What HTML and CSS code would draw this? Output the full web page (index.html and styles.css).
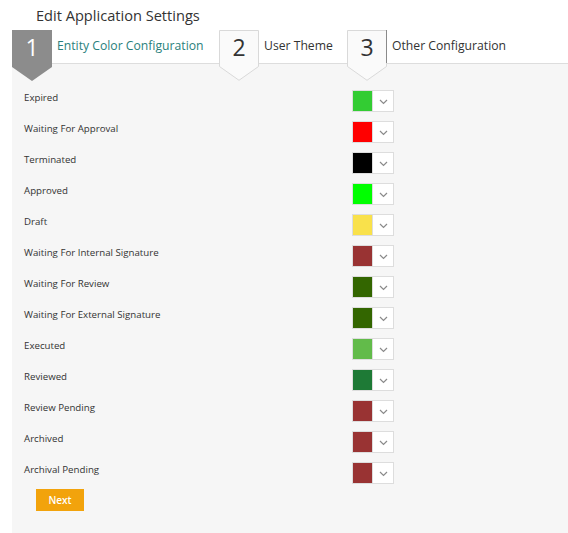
FILE: index.html
```html
<!DOCTYPE html>
<html>
<head>
<meta charset="utf-8">
<link rel="stylesheet" href="styles.css">
</head>
<body>
<div class="title">Edit Application Settings</div>
<div class="tabs">
  <div class="tab tab-1">
    <div class="badge badge-active">
      <svg class="badge-shape" width="40" height="51" viewBox="0 0 40 51"><polygon points="0,0 40,0 40,37 20,51 0,37" fill="#8c8c8c"/></svg>
      <span class="num">1</span>
    </div>
    <span class="tab-label active">Entity Color Configuration</span>
  </div>
  <div class="tab tab-2">
    <div class="badge">
      <svg class="badge-shape" width="40" height="51" viewBox="0 0 40 51"><polygon points="0.5,0.5 39.5,0.5 39.5,36.5 20,50.3 0.5,36.5" fill="#fafafa" stroke="#d9d9d9"/></svg>
      <span class="num">2</span>
    </div>
    <span class="tab-label">User Theme</span>
  </div>
  <div class="tab tab-3">
    <div class="badge">
      <svg class="badge-shape" width="40" height="51" viewBox="0 0 40 51"><polygon points="0.5,0.5 39.5,0.5 39.5,36.5 20,50.3 0.5,36.5" fill="#fafafa" stroke="#d9d9d9"/><line x1="39.5" y1="0" x2="39.5" y2="33" stroke="#8a8a8a"/></svg>
      <span class="num">3</span>
    </div>
    <span class="tab-label">Other Configuration</span>
  </div>
</div>
<div class="panel">
  <div class="rows">
    <div class="label">Expired</div><div class="picker"><span class="swatch" style="background:#33cc33"></span><span class="arrow"><svg width="9" height="6" viewBox="0 0 9 6"><polyline points="1,1 4.5,4.5 8,1" fill="none" stroke="#8a8a8a" stroke-width="1.2"/></svg></span></div>
    <div class="label">Waiting For Approval</div><div class="picker"><span class="swatch" style="background:#ff0000"></span><span class="arrow"><svg width="9" height="6" viewBox="0 0 9 6"><polyline points="1,1 4.5,4.5 8,1" fill="none" stroke="#8a8a8a" stroke-width="1.2"/></svg></span></div>
    <div class="label">Terminated</div><div class="picker"><span class="swatch" style="background:#000000"></span><span class="arrow"><svg width="9" height="6" viewBox="0 0 9 6"><polyline points="1,1 4.5,4.5 8,1" fill="none" stroke="#8a8a8a" stroke-width="1.2"/></svg></span></div>
    <div class="label">Approved</div><div class="picker"><span class="swatch" style="background:#00ff00"></span><span class="arrow"><svg width="9" height="6" viewBox="0 0 9 6"><polyline points="1,1 4.5,4.5 8,1" fill="none" stroke="#8a8a8a" stroke-width="1.2"/></svg></span></div>
    <div class="label">Draft</div><div class="picker"><span class="swatch" style="background:#f9e14b"></span><span class="arrow"><svg width="9" height="6" viewBox="0 0 9 6"><polyline points="1,1 4.5,4.5 8,1" fill="none" stroke="#8a8a8a" stroke-width="1.2"/></svg></span></div>
    <div class="label">Waiting For Internal Signature</div><div class="picker"><span class="swatch" style="background:#993333"></span><span class="arrow"><svg width="9" height="6" viewBox="0 0 9 6"><polyline points="1,1 4.5,4.5 8,1" fill="none" stroke="#8a8a8a" stroke-width="1.2"/></svg></span></div>
    <div class="label">Waiting For Review</div><div class="picker"><span class="swatch" style="background:#336600"></span><span class="arrow"><svg width="9" height="6" viewBox="0 0 9 6"><polyline points="1,1 4.5,4.5 8,1" fill="none" stroke="#8a8a8a" stroke-width="1.2"/></svg></span></div>
    <div class="label">Waiting For External Signature</div><div class="picker"><span class="swatch" style="background:#336600"></span><span class="arrow"><svg width="9" height="6" viewBox="0 0 9 6"><polyline points="1,1 4.5,4.5 8,1" fill="none" stroke="#8a8a8a" stroke-width="1.2"/></svg></span></div>
    <div class="label">Executed</div><div class="picker"><span class="swatch" style="background:#62bb4a"></span><span class="arrow"><svg width="9" height="6" viewBox="0 0 9 6"><polyline points="1,1 4.5,4.5 8,1" fill="none" stroke="#8a8a8a" stroke-width="1.2"/></svg></span></div>
    <div class="label">Reviewed</div><div class="picker"><span class="swatch" style="background:#1e7a36"></span><span class="arrow"><svg width="9" height="6" viewBox="0 0 9 6"><polyline points="1,1 4.5,4.5 8,1" fill="none" stroke="#8a8a8a" stroke-width="1.2"/></svg></span></div>
    <div class="label">Review Pending</div><div class="picker"><span class="swatch" style="background:#993333"></span><span class="arrow"><svg width="9" height="6" viewBox="0 0 9 6"><polyline points="1,1 4.5,4.5 8,1" fill="none" stroke="#8a8a8a" stroke-width="1.2"/></svg></span></div>
    <div class="label">Archived</div><div class="picker"><span class="swatch" style="background:#993333"></span><span class="arrow"><svg width="9" height="6" viewBox="0 0 9 6"><polyline points="1,1 4.5,4.5 8,1" fill="none" stroke="#8a8a8a" stroke-width="1.2"/></svg></span></div>
    <div class="label">Archival Pending</div><div class="picker"><span class="swatch" style="background:#993333"></span><span class="arrow"><svg width="9" height="6" viewBox="0 0 9 6"><polyline points="1,1 4.5,4.5 8,1" fill="none" stroke="#8a8a8a" stroke-width="1.2"/></svg></span></div>
  </div>
  <button class="next">Next</button>
</div>
</body>
</html>
```
FILE: styles.css
```css
html, body {
  margin: 0;
  padding: 0;
  background: #ffffff;
}
body {
  font-family: "Open Sans", "Noto Sans", sans-serif;
  color: #333333;
  width: 568px;
  height: 533px;
  overflow: hidden;
}
.title {
  height: 30px;
  padding-left: 36px;
  font-size: 14.6px;
  line-height: 30px;
  color: #333333;
}
.tabs {
  display: flex;
  height: 33px;
  margin-left: 12px;
  position: relative;
  z-index: 2;
}
.tab {
  display: flex;
  align-items: flex-start;
}
.tab-1 { width: 207px; }
.tab-2 { width: 128px; }
.tab-3 { width: 200px; }
.badge {
  position: relative;
  width: 40px;
  height: 51px;
  flex: none;
}
.badge-shape {
  position: absolute;
  left: 0;
  top: 0;
}
.num {
  position: relative;
  display: block;
  text-align: center;
  font-size: 23px;
  line-height: 35px;
  color: #333333;
  font-weight: 400;
}
.badge-active .num {
  color: #ffffff;
}
.tab-label {
  margin-left: 5px;
  font-size: 12.2px;
  line-height: 31px;
  color: #333333;
  white-space: nowrap;
}
.tab-label.active {
  color: #2a7f7c;
}
.panel {
  margin-left: 12px;
  height: 445px;
  background: #f6f6f6;
  border-top: 1px solid #dddddd;
  padding: 26px 0 0 12px;
}
.rows {
  display: grid;
  grid-template-columns: 328px 42px;
  grid-auto-rows: 22px;
  row-gap: 9px;
  align-items: center;
}
.label {
  font-size: 9.7px;
  color: #333333;
  margin-top: -8px;
}
.picker {
  display: flex;
  width: 40px;
  height: 20px;
  border: 1px solid #dddddd;
  background: #ffffff;
}
.swatch {
  width: 19px;
  height: 20px;
  border-right: 1px solid #dddddd;
}
.arrow {
  flex: 1;
  display: flex;
  align-items: center;
  justify-content: center;
  padding-top: 2px;
}
.arrow svg {
  display: block;
}
.next {
  display: block;
  margin: 5px 0 0 12px;
  width: 48px;
  height: 22px;
  border: none;
  background: #f2a30c;
  color: #ffffff;
  font-family: "Open Sans", "Noto Sans", sans-serif;
  font-size: 10px;
  font-weight: 600;
  padding: 0;
}
```
